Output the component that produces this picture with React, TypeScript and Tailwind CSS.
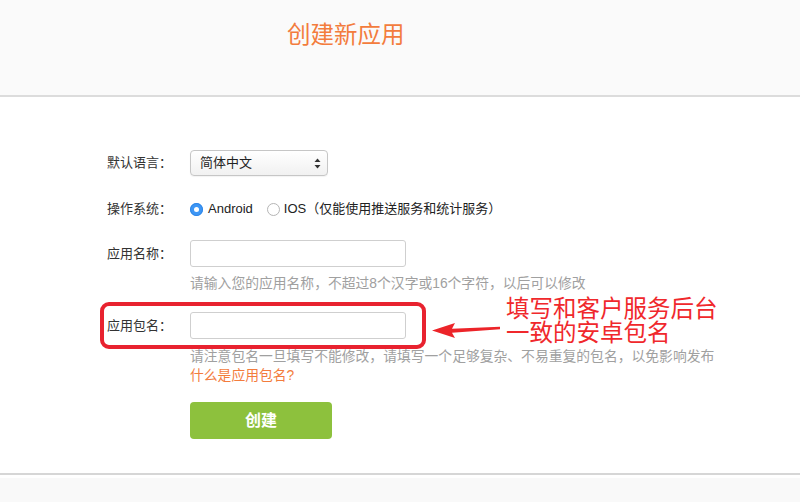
import { useState } from 'react';

const font = { fontFamily: '"Liberation Sans", "Noto Sans CJK SC", sans-serif' };

function Radio({ checked }: { checked: boolean }) {
  return checked ? (
    <span className="inline-flex h-[13px] w-[13px] items-center justify-center rounded-full bg-[#3d96f5] shadow-[inset_0_0_0_1px_#2f86e6]">
      <span className="h-[5px] w-[5px] rounded-full bg-white" />
    </span>
  ) : (
    <span className="inline-block h-[13px] w-[13px] rounded-full border border-[#b5b5b5] bg-white" />
  );
}

export default function App() {
  const [os, setOs] = useState('android');

  return (
    <div className="relative flex h-[502px] w-[800px] flex-col overflow-hidden bg-white text-[#333]" style={font}>
      <div className="h-[97px] shrink-0 border-b-2 border-[#dcdcdc] bg-[#fafafa] pl-[287px] pt-[21px]">
        <h1 className="text-[23.5px] leading-[28px] text-[#f37c3d]">创建新应用</h1>
      </div>

      <div className="h-[376px] shrink-0 pl-[107px] pt-[53px] text-[13px]">
        <div className="flex h-[26px] items-center">
          <span className="w-[83px]">默认语言：</span>
          <div className="flex h-[26px] w-[138px] items-center justify-between rounded-[4px] border border-[#c6c6c6] bg-gradient-to-b from-white to-[#f1f1f1] pl-[9px] pr-[6px] shadow-[0_1px_1px_rgba(0,0,0,0.05)]">
            <span className="text-[13px] text-[#222]">简体中文</span>
            <svg width="7" height="11" viewBox="0 0 7 11">
              <path d="M3.5 0.5 L6.5 4 L0.5 4 Z" fill="#333" />
              <path d="M3.5 10.5 L6.5 7 L0.5 7 Z" fill="#333" />
            </svg>
          </div>
        </div>

        <div className="mt-[23px] flex h-[20px] items-center">
          <span className="w-[83px]">操作系统：</span>
          <button type="button" className="flex items-center gap-[5px]" onClick={() => setOs('android')}>
            <Radio checked={os === 'android'} />
            <span className="text-[#222]">Android</span>
          </button>
          <button type="button" className="ml-[14px] flex items-center gap-[4px]" onClick={() => setOs('ios')}>
            <Radio checked={os === 'ios'} />
            <span className="text-[13px] text-[#222]">IOS（仅能使用推送服务和统计服务）</span>
          </button>
        </div>

        <div className="mt-[21px] flex h-[27px] items-center">
          <span className="w-[83px]">应用名称：</span>
          <input className="h-[27px] w-[216px] rounded-[3px] border border-[#cfcfcf] bg-white px-2 outline-none" />
        </div>
        <p className="mt-[7px] pl-[83px] text-[13.8px] leading-[20px] text-[#a0a0a0]">
          请输入您的应用名称，不超过8个汉字或16个字符，以后可以修改
        </p>

        <div className="mt-[18px] flex h-[27px] items-center">
          <span className="w-[83px]">应用包名：</span>
          <input className="h-[27px] w-[216px] rounded-[3px] border border-[#cfcfcf] bg-white px-2 outline-none" />
        </div>
        <p className="mt-[8px] pl-[83px] text-[13.8px] leading-[19px] text-[#a0a0a0]">
          请注意包名一旦填写不能修改，请填写一个足够复杂、不易重复的包名，以免影响发布
        </p>
        <a href="#" className="block pl-[83px] text-[13.8px] leading-[20px] text-[#f37c3d]">
          什么是应用包名?
        </a>

        <div className="mt-[16px] pl-[83px]">
          <button className="h-[37px] w-[142px] rounded-[4px] bg-[#8dc13d] text-[16px] font-bold text-white">
            创建
          </button>
        </div>
      </div>

      <div className="flex-1 border-t-2 border-[#d6d6d6]">
        <div className="h-full border-t-[3px] border-white bg-[#f9f9f9]" />
      </div>

      {/* annotation overlay */}
      <div className="pointer-events-none absolute left-[100px] top-[302px] h-[47px] w-[326px] rounded-[9px] border-4 border-[#e8222f]" />
      <svg className="pointer-events-none absolute left-[430px] top-[318px]" width="72" height="24" viewBox="0 0 72 24">
        <polygon points="2,12.5 25,5 22,10.8 70,8.8 70,11.2 22,14.8 25,20" fill="#ec2429" />
      </svg>
      <div className="pointer-events-none absolute left-[506px] top-[297px] text-[23.5px] leading-[24px] text-[#f0282c]">
        <div>填写和客户服务后台</div>
        <div>一致的安卓包名</div>
      </div>
    </div>
  );
}
